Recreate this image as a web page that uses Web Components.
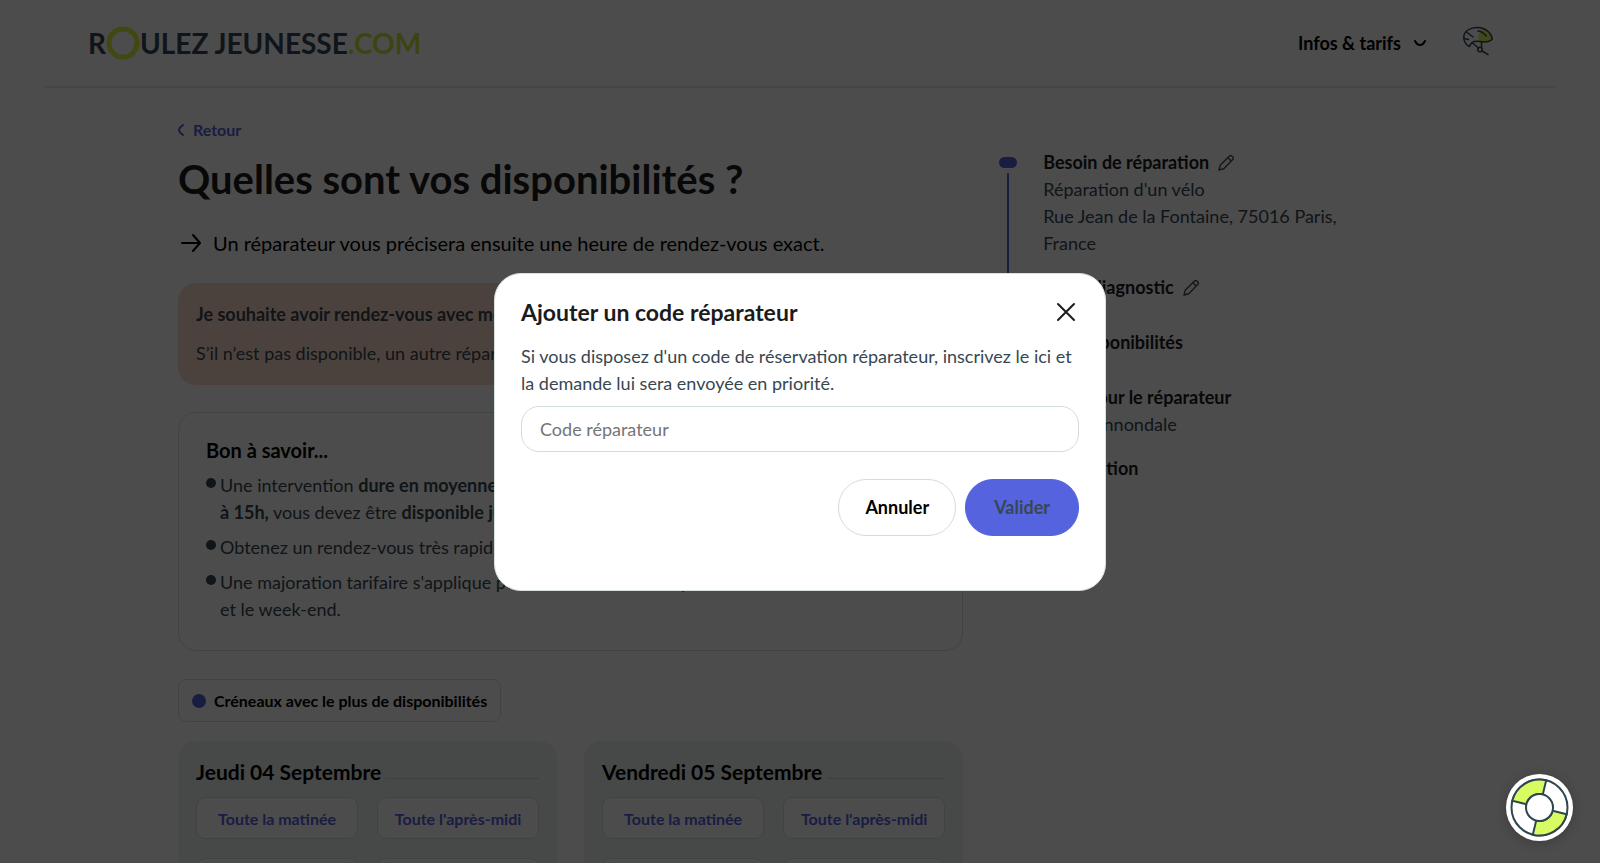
<!DOCTYPE html>
<html lang="fr">
<head>
<meta charset="utf-8">
<meta name="viewport" content="width=device-width, initial-scale=1">
<title>Roulez Jeunesse – Vos disponibilités</title>
<style>
  :root {
    --ink: #1b1b1b;
    --slate: #374752;
    --blue: #5663de;
    --lime: #dafb5e;
    --line: #d8e0de;
    --mint: #eaf3f0;
    --peach: #ffdccb;
  }
  html, body { margin: 0; height: 100%; }
  body {
    overflow: hidden;
    background: #fff;
    color: var(--slate);
    font: 400 18px/27px Lato, "Liberation Sans", sans-serif;
  }
</style>
</head>
<body>
<rj-header></rj-header>

<rj-layout>
  <rj-availability></rj-availability>
  <rj-steps slot="side">
    <rj-step heading="Besoin de réparation" editable>Réparation d'un vélo<br>Rue Jean de la Fontaine, 75016 Paris, France</rj-step>
    <rj-step heading="Votre diagnostic" editable></rj-step>
    <rj-step heading="Vos disponibilités"></rj-step>
    <rj-step heading="Infos pour le réparateur">Vélo Cannondale</rj-step>
    <rj-step heading="Réservation" last></rj-step>
  </rj-steps>
</rj-layout>

<rj-modal heading="Ajouter un code réparateur">
  <rj-code-form></rj-code-form>
</rj-modal>
<rj-help></rj-help>

<script>
const define = (name, html, setup) => {
  const template = document.createElement('template');
  template.innerHTML = html;
  customElements.define(name, class extends HTMLElement {
    constructor() {
      super();
      this.attachShadow({ mode: 'open' }).append(template.content.cloneNode(true));
    }
    connectedCallback() { if (setup) setup(this, this.shadowRoot); }
  });
};

define('rj-logo', `
  <style>
    :host { display: block; }
    a { display: flex; align-items: center; color: #34495a; text-decoration: none; font-size: 28px; line-height: 34px; font-weight: 700; white-space: pre; }
    svg { display: block; width: 34px; height: 34px; }
    .tld { color: #c9e63a; }
  </style>
  <a href="#" aria-label="Roulez Jeunesse .com"><span>R</span><svg viewBox="0 0 34 34" aria-hidden="true"><circle cx="17" cy="17" r="14" fill="none" stroke="#dcf03c" stroke-width="5"/></svg><span>ULEZ JEUNESSE</span><span class="tld">.COM</span></a>
`);

define('rj-header', `
  <style>
    :host { display: block; padding: 0 44px; }
    header { display: flex; align-items: center; justify-content: space-between; height: 86px; padding: 0 63px 0 44px; border-bottom: 2px solid #e6eaea; }
    nav { display: flex; align-items: center; gap: 36px; }
    button { display: flex; align-items: center; gap: 12px; padding: 0; border: 0; background: none; color: #000; font: inherit; font-weight: 700; }
    svg { display: block; }
    .helmet { display: block; }
  </style>
  <header>
    <rj-logo></rj-logo>
    <nav>
      <button type="button">Infos &amp; tarifs
        <svg width="14" height="14" viewBox="0 0 14 14" fill="none" stroke="#000" stroke-width="2" stroke-linecap="round" stroke-linejoin="round"><path d="M2 5Q4 9 7 9T12 5"/></svg>
      </button>
      <a class="helmet" href="#" aria-label="Mon compte">
        <svg width="30" height="34" viewBox="0 0 30 34" fill="none" stroke="#34495a" stroke-width="1.500" stroke-linecap="round" stroke-linejoin="round">
          <path d="M15 15C15 9 17 4 20 2.500C26 5 29 10 29 14C24 17 20 17 15 15Z" fill="#d8f55a" stroke="none"/>
          <path d="M6.500 20.500C3 19 .8 15 .8 11C1 5 7 1.500 14 1.500C22 1.500 28 6 29.300 13C26 16.500 22 16.500 17 15.500C12 14.500 8 15.500 6.500 20.500Z"/>
          <path d="M3.500 6L10 11M1 12.500L5.500 13.500M15 5C19 5.500 21 7 23 10M9.500 17L15.500 22M18.500 16V21"/>
          <circle cx="17" cy="23.500" r="2.300"/><path d="M19 25L25 28.500"/>
        </svg>
      </a>
    </nav>
  </header>
`);

define('rj-layout', `
  <style>
    :host { display: block; padding: 30px 178px 0; }
    .grid { display: grid; grid-template-columns: minmax(0, 13fr) minmax(0, 7fr); column-gap: 36px; }
    aside { padding-top: 31px; }
  </style>
  <div class="grid"><main><slot></slot></main><aside><slot name="side"></slot></aside></div>
`);

define('rj-availability', `
  <style>
    :host { display: block; }
    .back { display: flex; width: fit-content; align-items: center; gap: 9px; color: var(--blue); font-size: 16px; line-height: 24px; font-weight: 700; text-decoration: none; }
    svg { display: block; }
    h1 { margin: 13px 0 25px; color: var(--ink); font-size: 40px; line-height: 48px; font-weight: 700; }
    .hint { display: flex; align-items: center; gap: 9px; margin: 0 0 25px; color: #000; font-size: 20px; line-height: 30px; }
    .notice { display: grid; gap: 12px; padding: 18px; border-radius: 18px; background: var(--peach); }
    .notice p { margin: 0; }
    .good { margin-top: 27px; padding: 24px 27px 27px; border: 1px solid var(--line); border-radius: 18px; }
    h2 { margin: 0 0 8px; color: #000; font-size: 20px; line-height: 27px; font-weight: 700; }
    ul { display: grid; gap: 8px; margin: 0; padding: 0; list-style: none; }
    li { display: grid; grid-template-columns: 10px 1fr; column-gap: 4px; }
    li::before { content: ""; height: 10px; margin-top: 6px; border-radius: 50%; background: var(--slate); }
    .legend { display: flex; box-sizing: border-box; width: fit-content; align-items: center; gap: 8px; margin: 28px 0 19px; padding: 8px 13px; border: 1px solid var(--line); border-radius: 8px; color: #000; font-size: 16px; line-height: 25px; font-weight: 700; }
    .legend::before { content: ""; width: 14px; height: 14px; border-radius: 50%; background: var(--blue); }
    .days { display: grid; grid-template-columns: 1fr 1fr; gap: 27px; }
  </style>
  <a class="back" href="#"><svg width="6" height="12" viewBox="0 0 6 12" fill="none" stroke="#5663de" stroke-width="2" stroke-linecap="round" stroke-linejoin="round"><path d="M5 1Q1 4 1 6T5 11"/></svg>Retour</a>
  <h1>Quelles sont vos disponibilités ?</h1>
  <p class="hint"><svg width="26" height="20" viewBox="0 0 26 20" fill="none" stroke="#000" stroke-width="2" stroke-linecap="round" stroke-linejoin="round"><path d="M4 10h18M15 2l7 8-7 8"/></svg>Un réparateur vous précisera ensuite une heure de rendez-vous exact.</p>
  <section class="notice">
    <p><b>Je souhaite avoir rendez-vous avec mon réparateur habituel</b></p>
    <p>S’il n’est pas disponible, un autre réparateur pourra intervenir.</p>
  </section>
  <section class="good">
    <h2>Bon à savoir...</h2>
    <ul>
      <li><span>Une intervention <b>dure en moyenne une heure.</b> Ainsi, si vous choisissez le créneau <b>de 12h à&nbsp;15h,</b> vous devez être <b>disponible jusqu'à 16h.</b></span></li>
      <li><span>Obtenez un rendez-vous très rapidement en choisissant plusieurs créneaux.</span></li>
      <li><span>Une majoration tarifaire s'applique pour les interventions après 20h en semaine, les fériés et&nbsp;le&nbsp;week-end.</span></li>
    </ul>
  </section>
  <div class="legend">Créneaux avec le plus de disponibilités</div>
  <div class="days">
    <rj-day date="Jeudi 04 Septembre"></rj-day>
    <rj-day date="Vendredi 05 Septembre"></rj-day>
  </div>
`);

define('rj-day', `
  <style>
    :host { display: block; padding: 18px; border-radius: 18px; background: var(--mint); }
    .head { display: flex; align-items: center; gap: 5px; margin-bottom: 12px; }
    h3 { margin: 0; color: #000; font-size: 21px; line-height: 26px; font-weight: 700; white-space: nowrap; }
    .rule { flex: 1; height: 1px; margin-top: 12px; background: #cdd6d4; }
    .slots { display: grid; grid-template-columns: 1fr 1fr; gap: 19px; }
    button { height: 42px; padding: 0; border: 1px solid var(--line); border-radius: 9px; background: #fff; color: var(--blue); font: inherit; font-size: 16px; font-weight: 700; }
  </style>
  <div class="head"><h3></h3><span class="rule"></span></div>
  <div class="slots">
    <button type="button">Toute la matinée</button><button type="button">Toute l'après-midi</button>
    <button type="button">09h - 12h</button><button type="button">12h - 15h</button>
  </div>
`, (host, root) => { root.querySelector('h3').textContent = host.getAttribute('date'); });

define('rj-steps', `
  <style>:host { display: grid; }</style>
  <slot></slot>
`);

define('rj-step', `
  <style>
    :host { display: grid; grid-template-columns: 18px minmax(0, 1fr); column-gap: 26px; min-height: 55px; padding-right: 36px; }
    .mark { display: flex; flex-direction: column; align-items: center; gap: 5px; padding-top: 8px; }
    .dot { width: 18px; height: 11px; border-radius: 6px; background: var(--blue); }
    .bar { flex: 1; width: 2px; background: var(--blue); }
    :host([last]) .bar { display: none; }
    .body { padding-bottom: 17px; }
    .title { display: flex; align-items: center; gap: 9px; color: var(--ink); }
    h4 { margin: 0; font: inherit; font-weight: 700; }
    button { display: none; padding: 0; border: 0; background: none; }
    :host([editable]) button { display: block; }
    svg { display: block; }
  </style>
  <div class="mark"><span class="dot"></span><span class="bar"></span></div>
  <div class="body">
    <div class="title"><h4></h4>
      <button type="button" aria-label="Modifier"><svg width="16" height="16" viewBox="0 0 16 16" fill="none" stroke="#4a4a4a" stroke-width="1.400" stroke-linejoin="round"><path d="M1 15l1.200-4.800L11.200 1.300a2 2 0 0 1 3 0l.5.5a2 2 0 0 1 0 2.800L5.800 13.800ZM10 2.800l3.400 3.400"/></svg></button>
    </div>
    <slot></slot>
  </div>
`, (host, root) => { root.querySelector('h4').textContent = host.getAttribute('heading'); });

define('rj-modal', `
  <style>
    :host { position: fixed; inset: 0; display: flex; align-items: center; justify-content: center; background: rgba(0, 0, 0, .7); }
    section { box-sizing: border-box; width: 612px; max-width: 90%; padding: 25px 26px 54px; border: 1px solid var(--line); border-radius: 27px; background: #fff; }
    .top { display: flex; align-items: center; justify-content: space-between; margin-bottom: 18px; }
    h2 { margin: 0; color: var(--ink); font-size: 23px; line-height: 26px; font-weight: 700; }
    button { width: 26px; height: 26px; padding: 0; border: 0; background: none; }
    svg { display: block; }
  </style>
  <section role="dialog" aria-modal="true" aria-labelledby="title">
    <div class="top"><h2 id="title"></h2>
      <button type="button" aria-label="Fermer"><svg width="26" height="26" viewBox="0 0 26 26" fill="none" stroke="#1b1b1b" stroke-width="2" stroke-linecap="round"><path d="M5 5l16 16M21 5L5 21"/></svg></button>
    </div>
    <slot></slot>
  </section>
`, (host, root) => { root.querySelector('h2').textContent = host.getAttribute('heading'); });

define('rj-code-form', `
  <style>
    :host { display: block; }
    label { display: block; margin-bottom: 9px; }
    input { display: block; box-sizing: border-box; width: 100%; height: 46px; padding: 0 18px; border: 1px solid #d3dddb; border-radius: 18px; background: #fff; color: var(--slate); font: inherit; }
    input::placeholder { color: #757575; }
    .actions { display: flex; justify-content: flex-end; gap: 9px; margin-top: 27px; }
    button { height: 57px; padding: 0 26px; border: 1px solid #d3dddb; border-radius: 28px; background: #fff; color: #000; font: inherit; font-weight: 700; }
    .primary { padding: 0 28px; border-color: var(--blue); background: var(--blue); color: var(--slate); }
  </style>
  <label for="code">Si vous disposez d'un code de réservation réparateur, inscrivez le ici et la demande lui sera envoyée en priorité.</label>
  <input id="code" type="text" placeholder="Code réparateur">
  <div class="actions"><button type="button">Annuler</button><button class="primary" type="submit">Valider</button></div>
`);

define('rj-help', `
  <style>
    :host { position: fixed; right: 27px; bottom: 22px; }
    button { display: block; width: 67px; height: 67px; padding: 0; border: 0; border-radius: 50%; background: #fff; box-shadow: 0 2px 12px rgba(0, 0, 0, .2); }
    svg { display: block; }
  </style>
  <button type="button" aria-label="Aide">
    <svg width="67" height="67" viewBox="0 0 67 67" fill="none" stroke="#2f4550" stroke-width="2">
      <circle cx="33.500" cy="33.500" r="28"/>
      <path d="M40.200 6.300A28 28 0 0 0 6.300 26.800L20.400 30.300A13.500 13.500 0 0 1 36.800 20.400Z" fill="#d9fb62"/>
      <path d="M26.800 60.700A28 28 0 0 0 60.700 40.200L46.600 36.700A13.500 13.500 0 0 1 30.200 46.600Z" fill="#d9fb62"/>
      <circle cx="33.500" cy="33.500" r="13.500" fill="#fff"/>
    </svg>
  </button>
`);
</script>
</body>
</html>
